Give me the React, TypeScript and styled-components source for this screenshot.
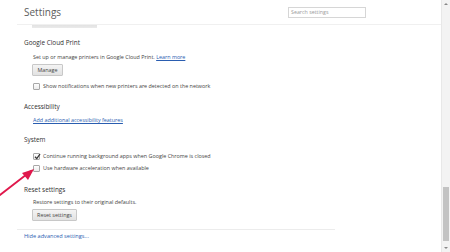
import React from 'react';
import styled, { createGlobalStyle } from 'styled-components';

const Global = createGlobalStyle`
  html, body { margin: 0; padding: 0; background: #fff; }
  body { font-family: "Open Sans", "Noto Sans", sans-serif; color: #444; }
`;

const Page = styled.div`
  position: relative;
  display: flex;
  width: 450px;
  height: 252px;
  overflow: hidden;
`;

const Main = styled.div`
  flex: 1;
  display: flex;
  flex-direction: column;
`;

const Header = styled.div`
  height: 24px;
  margin-left: 17px;
  padding: 0 75px 0 7px;
  display: flex;
  align-items: center;
  justify-content: space-between;
  border-bottom: 1px solid #f0f0f0;
`;

const Title = styled.h1`
  margin: 0;
  font-size: 10px;
  font-weight: 400;
  color: #5c5c5c;
`;

const Search = styled.div`
  width: 74px;
  height: 9px;
  border: 1px solid #d6d6d6;
  font-size: 5.3px;
  line-height: 9px;
  color: #9a9a9a;
  padding-left: 2px;
`;

const Peek = styled.div`
  margin-left: 32px;
  width: 65px;
  height: 3px;
  background: linear-gradient(#e2e2e2, #eaeaea);
`;

const Content = styled.div`
  display: flex;
  flex-direction: column;
  align-items: flex-start;
  padding-left: 24px;
`;

const Heading = styled.h3<{ $mt: number }>`
  margin: ${p => p.$mt}px 0 0;
  font-size: 6.4px;
  line-height: 10px;
  font-weight: 400;
  color: #303030;
`;

const Text = styled.div<{ $mt: number }>`
  margin: ${p => p.$mt}px 0 0 9px;
  font-size: 5.4px;
  line-height: 10px;
  color: #444;
`;

const Link = styled.a`
  color: #2a5db0;
  text-decoration: underline;
  cursor: pointer;
`;

const Button = styled.button<{ $mt: number; $w: number }>`
  margin: ${p => p.$mt}px 0 0 8px;
  width: ${p => p.$w}px;
  height: 12px;
  padding: 0;
  border: 1px solid #c8c8c8;
  border-radius: 1px;
  background: linear-gradient(#f4f4f4, #e2e2e2);
  font-family: inherit;
  font-size: 5.4px;
  color: #444;
`;

const CheckRow = styled.label<{ $mt: number }>`
  margin: ${p => p.$mt}px 0 0 9px;
  display: flex;
  align-items: center;
  gap: 3px;
  height: 10px;
  font-size: 5.4px;
  color: #444;
`;

const Box = styled.span`
  width: 5px;
  height: 5px;
  border: 1px solid #a8a8a8;
  border-radius: 1px;
  background: linear-gradient(#fdfdfd, #ececec);
  position: relative;
  display: inline-flex;
  align-items: center;
  justify-content: center;
`;

const Footer = styled.div`
  margin: 8px 0 0 17px;
  width: 311px;
  border-top: 1px solid #ececec;
  padding: 1px 0 0 7px;
  font-size: 5.6px;
  line-height: 10px;
`;

const Scrollbar = styled.div`
  width: 8px;
  height: 252px;
  background: #f3f3f3;
  border-left: 1px solid #e8e8e8;
  display: flex;
  flex-direction: column;
  align-items: center;
  justify-content: space-between;
`;

const Thumb = styled.div`
  width: 6px;
  height: 54px;
  background: #c3c3c3;
  margin-top: auto;
  margin-bottom: 3px;
`;

const ScrollArrow = styled.div<{ $down?: boolean }>`
  width: 0;
  height: 0;
  margin: 3px 0;
  border-left: 2px solid transparent;
  border-right: 2px solid transparent;
  ${p => (p.$down ? 'border-top: 2px solid #888;' : 'border-bottom: 2px solid #888;')}
`;

const Arrow = styled.svg`
  position: absolute;
  left: 0;
  top: 164px;
`;

const Check = ({ checked, mt, children }: { checked?: boolean; mt: number; children: React.ReactNode }) => (
  <CheckRow $mt={mt}>
    <Box>
      {checked && (
        <svg width="7" height="7" viewBox="0 0 7 7" style={{ position: 'absolute', left: 0, top: -1 }}>
          <path d="M1 3.8 L2.8 5.6 L6 1" fill="none" stroke="#333" strokeWidth="1.3" />
        </svg>
      )}
    </Box>
    {children}
  </CheckRow>
);

export default function App() {
  return (
    <Page>
      <Global />
      <Main>
        <Header>
          <Title>Settings</Title>
          <Search>Search settings</Search>
        </Header>
        <Peek />
        <Content>
          <Heading $mt={10}>Google Cloud Print</Heading>
          <Text $mt={4}>
            Set up or manage printers in Google Cloud Print. <Link>Learn more</Link>
          </Text>
          <Button $mt={2} $w={31}>Manage</Button>
          <Check mt={5}>Show notifications when new printers are detected on the network</Check>

          <Heading $mt={11}>Accessibility</Heading>
          <Text $mt={3}>
            <Link>Add additional accessibility features</Link>
          </Text>

          <Heading $mt={10}>System</Heading>
          <Check checked mt={6}>Continue running background apps when Google Chrome is closed</Check>
          <Check mt={2}>Use hardware acceleration when available</Check>

          <Heading $mt={12}>Reset settings</Heading>
          <Text $mt={2}>Restore settings to their original defaults.</Text>
          <Button $mt={2} $w={45}>Reset settings</Button>
        </Content>
        <Footer>
          <Link style={{ textDecoration: 'none' }}>Hide advanced settings...</Link>
        </Footer>
      </Main>
      <Scrollbar>
        <ScrollArrow />
        <Thumb />
        <ScrollArrow $down />
      </Scrollbar>
      <Arrow width="40" height="36" viewBox="0 0 40 36">
        <path d="M0 31 L31 7" stroke="#e0184c" strokeWidth="1.8" fill="none" strokeLinecap="round" />
        <path d="M34 5 L22 9 L28 16 Z" fill="#e0184c" />
      </Arrow>
    </Page>
  );
}
